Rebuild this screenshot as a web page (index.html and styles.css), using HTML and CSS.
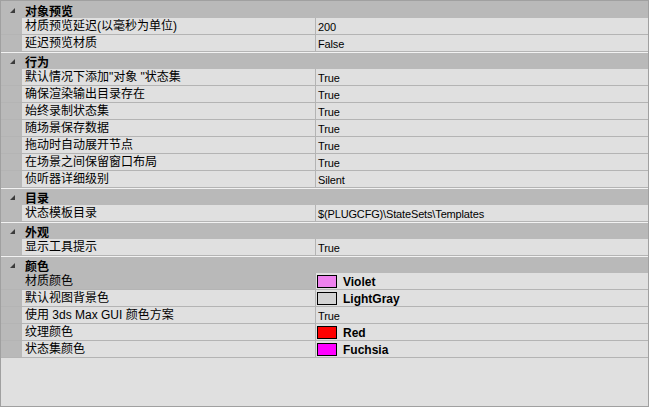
FILE: index.html
```html
<!DOCTYPE html>
<html>
<head>
<meta charset="utf-8">
<link rel="stylesheet" href="styles.css">
</head>
<body>
<div class="grid">
  <div class="group">
    <div class="cat"><span class="tri"><svg width="5" height="5" viewBox="0 0 5 5"><polygon points="5,0 5,5 0,5" fill="#3c3c3c"/></svg></span><span class="cat-label">对象预览</span></div>
    <div class="prop"><span class="margin"></span><span class="name">材质预览延迟(以毫秒为单位)</span><span class="value">200</span></div>
    <div class="prop"><span class="margin"></span><span class="name">延迟预览材质</span><span class="value">False</span></div>
  </div>
  <div class="group">
    <div class="cat"><span class="tri"><svg width="5" height="5" viewBox="0 0 5 5"><polygon points="5,0 5,5 0,5" fill="#3c3c3c"/></svg></span><span class="cat-label">行为</span></div>
    <div class="prop"><span class="margin"></span><span class="name">默认情况下添加"对象 "状态集</span><span class="value">True</span></div>
    <div class="prop"><span class="margin"></span><span class="name">确保渲染输出目录存在</span><span class="value">True</span></div>
    <div class="prop"><span class="margin"></span><span class="name">始终录制状态集</span><span class="value">True</span></div>
    <div class="prop"><span class="margin"></span><span class="name">随场景保存数据</span><span class="value">True</span></div>
    <div class="prop"><span class="margin"></span><span class="name">拖动时自动展开节点</span><span class="value">True</span></div>
    <div class="prop"><span class="margin"></span><span class="name">在场景之间保留窗口布局</span><span class="value">True</span></div>
    <div class="prop"><span class="margin"></span><span class="name">侦听器详细级别</span><span class="value">Silent</span></div>
  </div>
  <div class="group">
    <div class="cat"><span class="tri"><svg width="5" height="5" viewBox="0 0 5 5"><polygon points="5,0 5,5 0,5" fill="#3c3c3c"/></svg></span><span class="cat-label">目录</span></div>
    <div class="prop"><span class="margin"></span><span class="name">状态模板目录</span><span class="value">$(PLUGCFG)\StateSets\Templates</span></div>
  </div>
  <div class="group">
    <div class="cat"><span class="tri"><svg width="5" height="5" viewBox="0 0 5 5"><polygon points="5,0 5,5 0,5" fill="#3c3c3c"/></svg></span><span class="cat-label">外观</span></div>
    <div class="prop"><span class="margin"></span><span class="name">显示工具提示</span><span class="value">True</span></div>
  </div>
  <div class="group">
    <div class="cat"><span class="tri"><svg width="5" height="5" viewBox="0 0 5 5"><polygon points="5,0 5,5 0,5" fill="#3c3c3c"/></svg></span><span class="cat-label">颜色</span></div>
    <div class="prop selected"><span class="margin"></span><span class="name">材质颜色</span><span class="value color-value"><span class="swatch sw-violet"></span><b class="color-name">Violet</b></span></div>
    <div class="prop"><span class="margin"></span><span class="name">默认视图背景色</span><span class="value color-value"><span class="swatch sw-lightgray"></span><b class="color-name">LightGray</b></span></div>
    <div class="prop"><span class="margin"></span><span class="name">使用 3ds Max GUI 颜色方案</span><span class="value">True</span></div>
    <div class="prop"><span class="margin"></span><span class="name">纹理颜色</span><span class="value color-value"><span class="swatch sw-red"></span><b class="color-name">Red</b></span></div>
    <div class="prop"><span class="margin"></span><span class="name">状态集颜色</span><span class="value color-value"><span class="swatch sw-fuchsia"></span><b class="color-name">Fuchsia</b></span></div>
  </div>
</div>
</body>
</html>
```
FILE: styles.css
```css
html, body {
  margin: 0;
  padding: 0;
}
body {
  background: #e0e0e0;
  font-family: "Liberation Sans", "Noto Sans CJK SC", sans-serif;
  font-size: 12px;
  color: #000;
}
.grid {
  width: 649px;
  height: 407px;
  box-sizing: border-box;
  border: 1px solid #a0a0a0;
  background: #e0e0e0;
  overflow: hidden;
}
.cat {
  display: flex;
  align-items: center;
  height: 16px;
  background: #b9b9b9;
  border-top: 1px solid #f2f2f2;
}
.group:first-child .cat {
  border-top-color: #b9b9b9;
}
.tri {
  width: 24px;
  display: flex;
  padding-left: 9px;
  box-sizing: border-box;
  margin-top: 1px;
}
.tri svg {
  display: block;
}
.cat-label {
  font-weight: bold;
  font-family: "Noto Sans CJK SC", sans-serif;
  font-size: 12px;
  line-height: 16px;
  padding-top: 1px;
}
.prop {
  display: flex;
  height: 16px;
  border-bottom: 1px solid #b4b4b4;
}
.margin {
  width: 21px;
  flex: none;
  background: #b9b9b9;
}
.name {
  width: 290px;
  flex: none;
  padding-left: 3px;
  border-right: 1px solid #b4b4b4;
  background: #e0e0e0;
  line-height: 17px;
  white-space: nowrap;
  overflow: hidden;
  font-size: 12px;
}
.selected .name {
  background: #b9b9b9;
}
.value {
  flex: 1;
  padding-left: 2px;
  display: flex;
  align-items: center;
  font-family: "Liberation Sans", sans-serif;
  font-size: 11px;
  letter-spacing: -0.15px;
  line-height: 16px;
  padding-top: 1px;
  box-sizing: border-box;
  white-space: nowrap;
}
.color-value {
  padding-left: 1px;
  padding-top: 0;
}
.swatch {
  width: 18px;
  height: 11px;
  border: 1px solid #000;
  flex: none;
  margin-right: 6px;
}
.sw-violet { background: #ee82ee; }
.sw-lightgray { background: #d3d3d3; }
.sw-red { background: #ff0000; }
.sw-fuchsia { background: #ff00ff; }
.color-name {
  font-weight: bold;
  font-size: 12px;
  letter-spacing: 0;
  padding-top: 1px;
}
```
